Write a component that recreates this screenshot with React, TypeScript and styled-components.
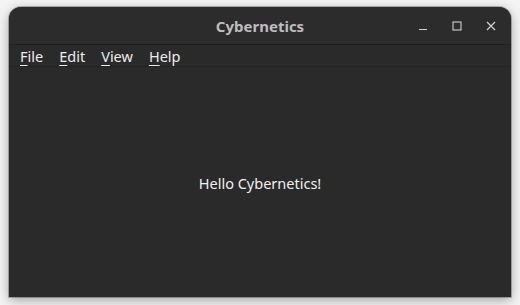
import React from "react";
import styled, {createGlobalStyle} from "styled-components";

const GlobalStyle = createGlobalStyle`
    html, body {
        margin: 0;
        padding: 0;
        background: #f4f4f4;
        font-family: "Noto Sans", "DejaVu Sans", sans-serif;
    }
`;

const menuItems = ["File", "Edit", "View", "Help"];

export default function App() {
    return (
        <>
            <GlobalStyle/>
            <Desktop>
                <Window>
                    <TitleBar>
                        <Title>Cybernetics</Title>
                        <Controls>
                            <ControlButton aria-label="minimize">
                                <svg width="10" height="10" viewBox="0 0 10 10">
                                    <path d="M1 8.5h8" stroke="#d0d0d0" strokeWidth="1"/>
                                </svg>
                            </ControlButton>
                            <ControlButton aria-label="maximize">
                                <svg width="10" height="10" viewBox="0 0 10 10">
                                    <rect x="1" y="1" width="8" height="8" fill="none" stroke="#d0d0d0" strokeWidth="1.1"/>
                                </svg>
                            </ControlButton>
                            <ControlButton aria-label="close">
                                <svg width="10" height="10" viewBox="0 0 10 10">
                                    <path d="M1 1l8 8M9 1l-8 8" stroke="#d0d0d0" strokeWidth="1.2"/>
                                </svg>
                            </ControlButton>
                        </Controls>
                    </TitleBar>
                    <MenuBar>
                        {menuItems.map(item => (
                            <MenuItem key={item}>
                                <Mnemonic>{item[0]}</Mnemonic>{item.slice(1)}
                            </MenuItem>
                        ))}
                    </MenuBar>
                    <Content>
                        <Greeting>Hello Cybernetics!</Greeting>
                    </Content>
                </Window>
            </Desktop>
        </>
    );
}

const Desktop = styled.div`
    width: 520px;
    height: 305px;
    padding: 7px 9px 0 9px;
    box-sizing: border-box;
    overflow: hidden;
`;

const Window = styled.div`
    width: 502px;
    height: 290px;
    display: flex;
    flex-direction: column;
    background: #2a2a2a;
    border-radius: 12px 12px 0 0;
    box-shadow: 0 3px 12px rgba(0, 0, 0, 0.35), 0 0 0 1px rgba(0, 0, 0, 0.25);
    overflow: hidden;
`;

const TitleBar = styled.div`
    height: 37px;
    flex-shrink: 0;
    position: relative;
    display: flex;
    align-items: center;
    justify-content: center;
    background: #2c2c2c;
    border-bottom: 1px solid #1e1e1e;
`;

const Title = styled.div`
    color: #bdbdbd;
    font-size: 15px;
    font-weight: 700;
    margin-top: 1px;
`;

const Controls = styled.div`
    position: absolute;
    right: 10px;
    top: 0;
    bottom: 0;
    display: flex;
    align-items: center;
    gap: 14px;
`;

const ControlButton = styled.div`
    width: 20px;
    height: 20px;
    display: flex;
    align-items: center;
    justify-content: center;
`;

const MenuBar = styled.div`
    height: 21px;
    flex-shrink: 0;
    display: flex;
    align-items: center;
    gap: 16px;
    padding: 0 11px;
    background: #2a2a2a;
    border-bottom: 1px solid #222;
`;

const MenuItem = styled.span`
    color: #ececec;
    font-size: 14.5px;
    line-height: 20px;
`;

const Mnemonic = styled.span`
    text-decoration: underline;
    text-underline-offset: 3px;
    text-decoration-thickness: 1px;
`;

const Content = styled.div`
    flex: 1;
    display: flex;
    align-items: center;
    justify-content: center;
`;

const Greeting = styled.div`
    color: #f0f0f0;
    font-size: 14.5px;
    margin-top: 2px;
`;
